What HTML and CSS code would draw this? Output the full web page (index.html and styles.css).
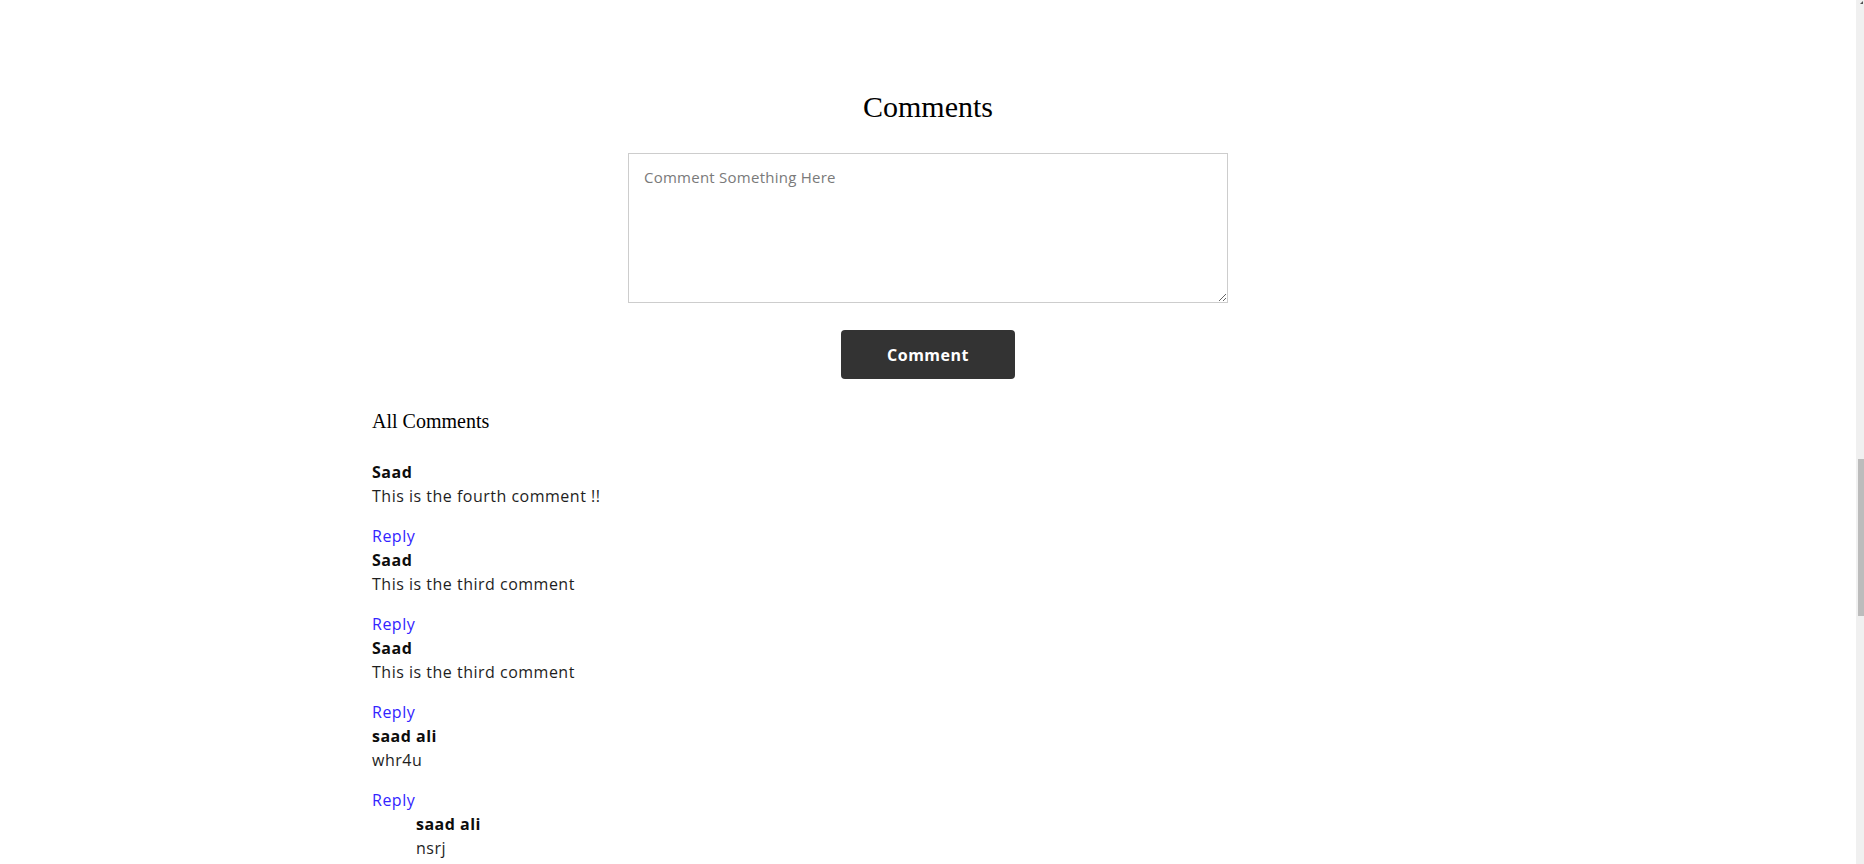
FILE: index.html
```html
<!DOCTYPE html>
<html lang="en">
<head>
<meta charset="utf-8">
<title>Comments</title>
<link rel="stylesheet" href="styles.css">
</head>
<body>
<div class="page">
  <h2 class="title">Comments</h2>
  <form class="comment-form">
    <textarea class="comment-input" placeholder="Comment Something Here"></textarea>
    <button type="button" class="comment-btn">Comment</button>
  </form>
  <section class="comments">
    <h3 class="comments-title">All Comments</h3>
    <div class="comment">
      <div class="name">Saad</div>
      <p class="text">This is the fourth comment !!</p>
      <a class="reply" href="#">Reply</a>
    </div>
    <div class="comment">
      <div class="name">Saad</div>
      <p class="text">This is the third comment</p>
      <a class="reply" href="#">Reply</a>
    </div>
    <div class="comment">
      <div class="name">Saad</div>
      <p class="text">This is the third comment</p>
      <a class="reply" href="#">Reply</a>
    </div>
    <div class="comment">
      <div class="name">saad ali</div>
      <p class="text">whr4u</p>
      <a class="reply" href="#">Reply</a>
      <div class="comment nested">
        <div class="name">saad ali</div>
        <p class="text">nsrj</p>
        <a class="reply" href="#">Reply</a>
      </div>
    </div>
  </section>
</div>
<div class="scrollbar">
  <div class="scroll-arrow"></div>
  <div class="scroll-thumb"></div>
</div>
</body>
</html>
```
FILE: styles.css
```css
html, body {
  margin: 0;
  padding: 0;
  overflow: hidden;
  background: #ffffff;
}

body {
  font-family: "Open Sans", "Liberation Sans", sans-serif;
  color: #1e1e1e;
}

.page {
  padding-right: 8px;
}

.title {
  font-family: "Liberation Serif", "Times New Roman", serif;
  font-size: 30px;
  font-weight: normal;
  line-height: 36px;
  color: #000;
  text-align: center;
  margin: 89px 0 0;
}

.comment-form {
  display: flex;
  flex-direction: column;
  align-items: center;
  margin: 0;
}

.comment-input {
  box-sizing: border-box;
  width: 600px;
  height: 150px;
  margin-top: 28px;
  padding: 12px 15px;
  border: 1px solid #cdcdcd;
  border-radius: 0;
  font-family: "Open Sans", "Liberation Sans", sans-serif;
  font-size: 15px;
  letter-spacing: 0.25px;
  line-height: 1.5;
  color: #222;
  outline: none;
  resize: both;
}

.comment-input::placeholder {
  color: #7a7a7a;
}

.comment-btn {
  box-sizing: border-box;
  width: 174px;
  height: 49px;
  margin-top: 27px;
  border: none;
  border-radius: 4px;
  background: #333333;
  color: #ffffff;
  font-family: "Open Sans", "Liberation Sans", sans-serif;
  font-size: 16px;
  font-weight: 700;
  letter-spacing: 0.5px;
  cursor: pointer;
}

.comments {
  max-width: 1112px;
  margin: 30px auto 0;
}

.comments-title {
  font-family: "Liberation Serif", "Times New Roman", serif;
  font-size: 20px;
  font-weight: normal;
  line-height: 24px;
  color: #000;
  margin: 0 0 27px;
}

.comment {
  font-size: 16px;
  line-height: 24px;
  letter-spacing: 0.5px;
}

.name {
  font-weight: 700;
  color: #0d0d0d;
}

.text {
  margin: 0 0 16px;
}

.reply {
  display: block;
  color: #3324ff;
  text-decoration: none;
}

.nested {
  margin-left: 44px;
}

.scrollbar {
  position: fixed;
  top: 0;
  right: 0;
  width: 8px;
  height: 100%;
  background: #f0f0f0;
}

.scroll-arrow {
  position: absolute;
  top: 1px;
  right: 1px;
  width: 0;
  height: 0;
  border-left: 3px solid transparent;
  border-bottom: 3px solid #505050;
}

.scroll-thumb {
  position: absolute;
  top: 459px;
  left: 2px;
  width: 6px;
  height: 157px;
  background: #bcbcbc;
}
```
